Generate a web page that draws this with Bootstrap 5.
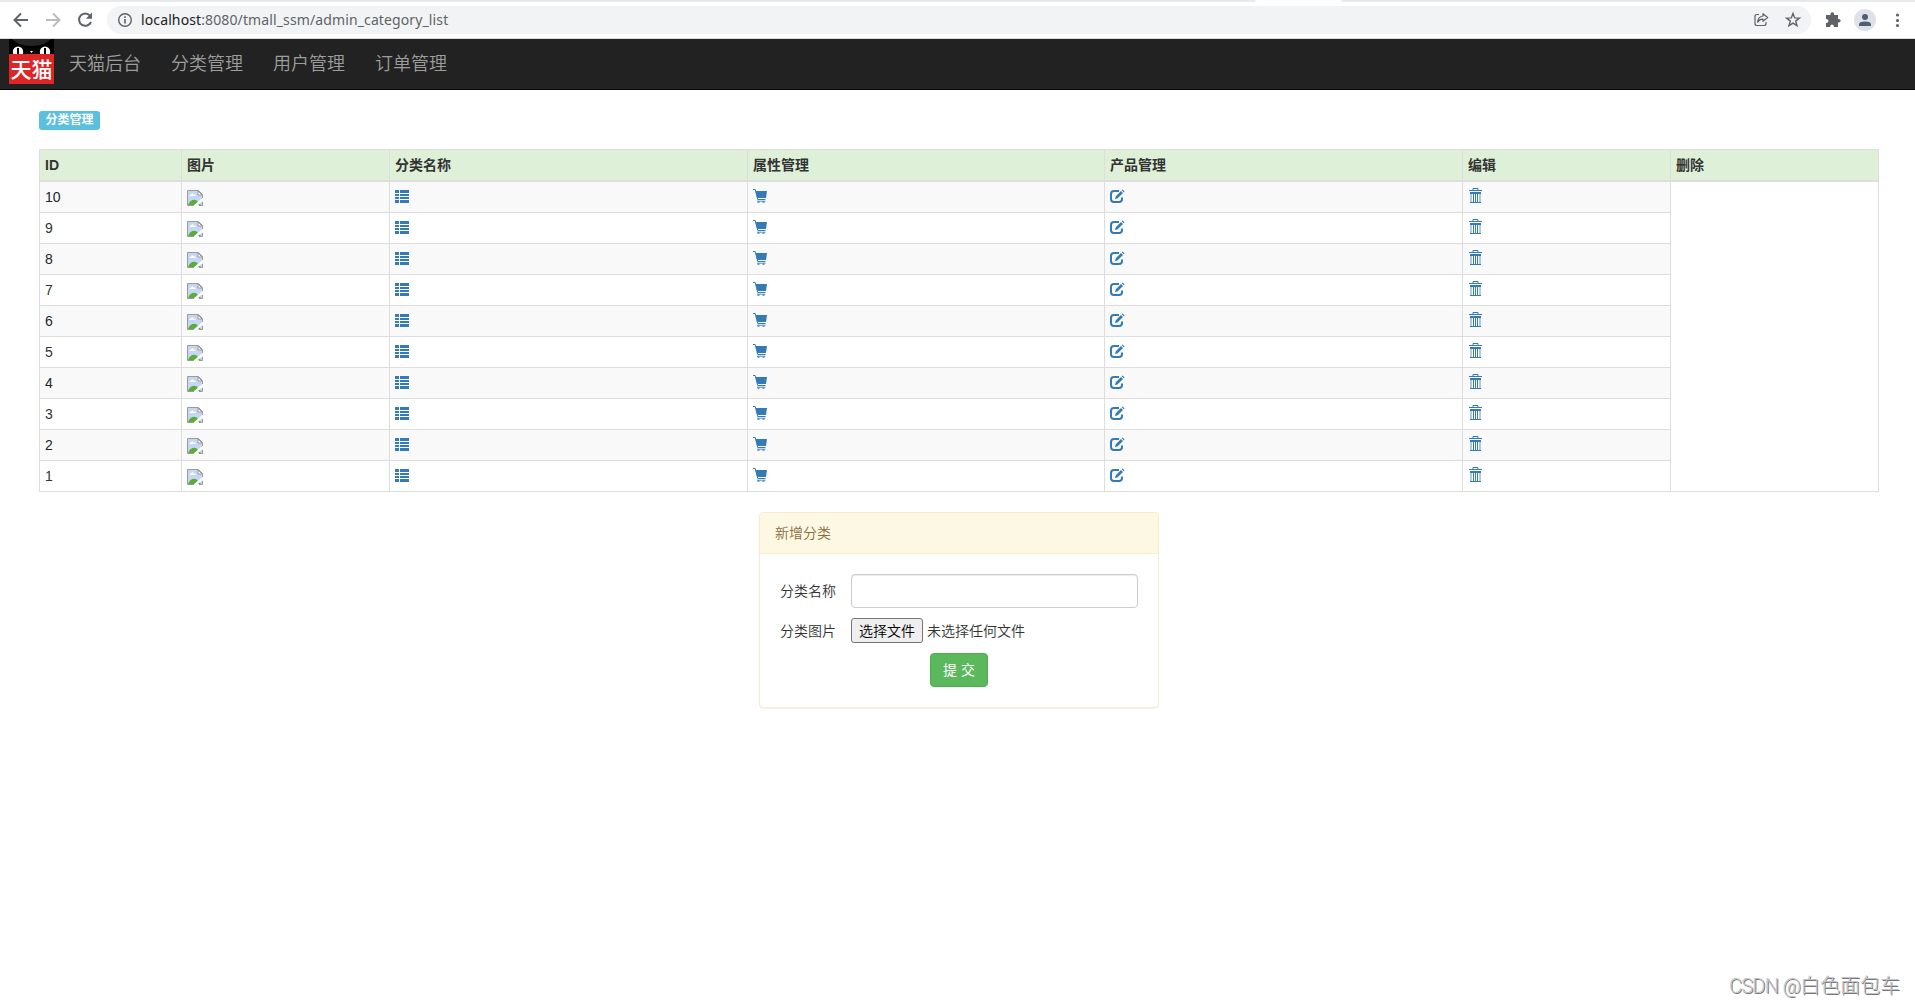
<!DOCTYPE html>
<html lang="zh-CN">
<head>
<meta charset="utf-8">
<title>分类管理</title>
<link href="https://cdn.jsdelivr.net/npm/bootstrap@5.3.0/dist/css/bootstrap.min.css" rel="stylesheet">
<style>
body{font-family:"Liberation Sans","Noto Sans CJK SC",sans-serif;font-size:14px;font-weight:350;line-height:20px;color:#333;background:#fff;height:1005px;overflow:hidden}
svg{display:block;flex:none}
.tabstrip{height:2px;background:#e7eaed}
.tab-active{width:87px;height:2px;margin-left:1255px;background:#fff;border-radius:2px 2px 0 0}
.toolbar{height:37px;border-bottom:1px solid #dadcdf;padding:4px 7px 4px 11px;color:#5f6368}
.toolbar .forward,.toolbar .reload{margin-left:12px}
.address{height:28px;background:#f1f3f4;border-radius:14px;margin-left:12px;margin-right:13px;padding:0 9px 0 10px}
.url{font-family:"Noto Sans","Open Sans",sans-serif;font-size:14px;font-weight:400;margin-left:8px;color:#5f6368;white-space:nowrap;letter-spacing:.12px}
.url b{font-weight:400;color:#202124}
.star{margin-left:15px}
.avatar{margin-left:12px}
.dots{margin-left:12px}
.topnav{height:51px;background:#222;border-bottom:1px solid #080808;padding:0 0 0 9px;align-items:flex-start}
.topnav .nav-link{color:#9d9d9d;font-size:18px;line-height:20px;padding:15px;font-weight:350}
.page{padding:21px 36px 0 39px}
.label-info{display:block;width:61px;height:19px;padding:0;line-height:18px;font-size:12px;font-weight:700;background:#5bc0de;border-radius:3px;margin-bottom:19px}
.cat-table{table-layout:fixed;width:1840px;margin-bottom:20px;border-collapse:separate;border-spacing:0;border:0 solid #ddd;border-width:1px 0 0 1px;color:#333}
.cat-table>:not(caption)>*>*{border:0 solid #ddd;border-width:0 1px 1px 0;padding:5px;height:31px;line-height:20px;vertical-align:top;box-shadow:none;color:#333}
.cat-table>thead>tr>th{background:#dff0d8;border-bottom-width:2px;height:32px}
.cat-table>tbody>tr:nth-child(odd)>td{background:#f9f9f9}
.cat-table>tbody>tr>td.blank{background:#fff}
.cat-table>tbody>tr>td:nth-child(2)>svg{margin-top:3px}
.cat-table a{display:block;width:16px;height:20px;color:#337ab7}
.cat-table a svg{padding-top:2px}
.cat-table a .icon-trash{padding-top:1px}
.panel-add{width:400px;height:196px;margin-left:720px;border:1px solid #faebcc;border-radius:4px;box-shadow:0 1px 1px rgba(0,0,0,.05)}
.panel-add .card-header{background:#fcf8e3;border-color:#faebcc;color:#8a6d3b;padding:10px 15px;height:41px}
.panel-add .card-body{padding:20px}
.field-name{width:71px}
.name-input{width:287px;height:34px;border:1px solid #ccc;border-radius:4px;box-shadow:inset 0 1px 1px rgba(0,0,0,.075);font-size:14px}
.file-row{height:29px}
.file-btn{width:72px;height:25px;padding:0;line-height:22px;border:1px solid #767676;border-radius:3px;background:#efefef;color:#000;font-size:14px;font-weight:350}
.send-row{margin-top:8px}
.send{width:58px;height:34px;padding:0;line-height:20px;font-size:14px;background:#5cb85c;border-color:#4cae4c;border-radius:4px}
.watermark{position:absolute;right:15px;top:971px;font-family:Roboto,"Noto Sans CJK SC",sans-serif;font-size:20px;line-height:30px;color:#c4c4c4;font-weight:300;white-space:nowrap;text-shadow:1px 1px 0 #777}
.watermark span{letter-spacing:-.7px}
</style>
</head>
<body class="position-relative">
<svg width="0" height="0" class="position-absolute" aria-hidden="true">
<symbol id="broken" viewBox="0 0 16 16"><path d="M.5.5h11l4 4v11H.5z" fill="#c5d7f5"/><path d="M2.500 6h6.200C8.700 4.500 7.500 4.200 6.800 4.700 6.400 2.800 4 3.200 4 4.700 3 4.400 2.200 5.200 2.500 6z" fill="#fff"/><path d="M1 15c2-5.500 7.500-7 10-3l3 3z" fill="#5bad36"/><path d="M16 7.500v3L10 16H6z" fill="#fff"/><path d="M.5 15.500V.5h11l4 4V8M.5 15.500H7M12 15.500h3.500V12" fill="none" stroke="#9b9b9b"/><path d="M11 1v4h4z" fill="#fff" stroke="#9b9b9b"/></symbol>
<symbol id="list" viewBox="0 0 14 15"><path d="M0 1h4v3H0zM5 1h9v3H5zM0 5h4v2H0zM5 5h9v2H5zM0 8h4v2H0zM5 8h9v2H5zM0 11h4v3H0zM5 11h9v3H5z" fill="currentColor"/></symbol>
<symbol id="cart" viewBox="0 0 14 15"><path d="M0 .5h2.200L4.700 10.500h7.800" fill="none" stroke="currentColor"/><path d="M2.500 2H14l-1 7H4.300z" fill="currentColor"/><path d="M4.500 12.500h2v1.200h-2zM9.500 12.500h2v1.200h-2z" fill="currentColor"/><path d="M4 12.200h8.500" stroke="currentColor" stroke-width=".8"/></symbol>
<symbol id="edit" viewBox="0 0 15 15"><path d="M9 2H4Q1 2 1 5v5q0 3 3 3h5q3 0 3-3V8.500" fill="none" stroke="currentColor" stroke-width="2"/><path d="M5 10.200l.8-3L11 2l2 2-5.300 5.300zM11.700 1.300l.9-.9 2 2-.9.9z" fill="currentColor"/></symbol>
<symbol id="trash" viewBox="0 0 14 16"><path d="M1 2.500h13M5 2V.5h5V2" fill="none" stroke="currentColor"/><path d="M2 4h11v2H2z" fill="currentColor"/><path d="M3 5v10M12 5v10" stroke="currentColor" stroke-opacity=".75"/><path d="M2 14.500h11M5.500 5v9M7.500 5v9M9.500 5v9" fill="none" stroke="currentColor"/></symbol>
</svg>
<div class="tabstrip"><div class="tab-active"></div></div>
<header class="toolbar d-flex align-items-center">
 <svg width="20" height="20" viewBox="0 0 20 20" fill="none" stroke="#5f6368" stroke-width="2"><path d="M17 10H4M10 3.500L3.500 10l6.500 6.500"/></svg>
 <svg class="forward" width="20" height="20" viewBox="0 0 20 20" fill="none" stroke="#babcbe" stroke-width="2"><path d="M3 10h13M10 3.500l6.500 6.500-6.500 6.500"/></svg>
 <svg class="reload" width="20" height="20" viewBox="0 0 20 20"><path d="M15 5.600A6.200 6.200 0 1 0 16 12" fill="none" stroke="#5f6368" stroke-width="2"/><path d="M17 2.500v6.200h-6.200z" fill="#5f6368"/></svg>
 <div class="address d-flex align-items-center flex-grow-1">
  <svg width="16" height="16" viewBox="0 0 16 16"><circle cx="8" cy="8" r="6.300" fill="none" stroke="#5f6368" stroke-width="1.400"/><path d="M8 7v4.500M8 4.300v1.600" stroke="#5f6368" stroke-width="1.600"/></svg>
  <span class="url"><b>localhost</b>:8080/tmall_ssm/admin_category_list</span>
  <svg class="ms-auto" width="16" height="16" viewBox="0 0 16 16" fill="none" stroke="#5f6368" stroke-width="1.200" stroke-linejoin="round"><path d="M6 2.500H4Q2 2.500 2 4.500v7q0 2 2 2h7q2 0 2-2V10"/><path d="M10 1.700L14.700 5.500 10 9.300V7.200Q6.500 7 4.700 10.200 5 4.500 10 4z"/></svg>
  <svg class="star" width="18" height="18" viewBox="0 0 18 18" fill="none" stroke="#5f6368" stroke-width="1.400"><path d="M9 2.500l1.700 4.400 4.700.2-3.700 3 1.300 4.600L9 12.100l-4 2.600 1.300-4.600-3.700-3 4.700-.2z"/></svg>
 </div>
 <svg width="18" height="18" viewBox="0 0 18 18"><path d="M2 4h4.500q-.3-2.700 1.800-2.700T10.100 4H14v4q2.700-.2 2.700 1.800T14 11.600V16h-4q.1-2.500-2-2.500T6.200 16H2v-4q2.500.1 2.500-2T2 8z" fill="#5f6368"/></svg>
 <svg class="avatar" width="22" height="22" viewBox="0 0 22 22"><circle cx="11" cy="11" r="11" fill="#dee1e6"/><circle cx="11" cy="8" r="3" fill="#4f5d75"/><path d="M5 17v-1.500q0-3 6-3t6 3V17z" fill="#4f5d75"/></svg>
 <svg class="dots" width="20" height="20" viewBox="0 0 20 20" fill="#5f6368"><circle cx="9.500" cy="5" r="1.600"/><circle cx="9.500" cy="10.500" r="1.600"/><circle cx="9.500" cy="15.500" r="1.600"/></svg>
</header>
<nav class="topnav d-flex">
 <svg width="45" height="45" viewBox="0 0 45 45"><path d="M0 0h3l6 4q13 4 27 0l6-4h3v16H0z" fill="#000"/><path d="M3 0l7 5q13 4 25 0l7-5z" fill="#252525"/><g fill="#fff"><ellipse cx="9" cy="13" rx="5.200" ry="5.500"/><ellipse cx="36" cy="13" rx="5.200" ry="5.500"/><path d="M21 12h3l-1.500 2z"/></g><path d="M8 9h2v7H8zM35 9h2v7h-2z" fill="#000"/><path d="M0 15h45v30H0z" fill="#dd2727"/><text x="1.500" y="37.500" font-family="Noto Sans CJK SC" font-size="21" font-weight="500" fill="#fff">天猫</text></svg>
 <a class="nav-link">天猫后台</a><a class="nav-link">分类管理</a><a class="nav-link">用户管理</a><a class="nav-link">订单管理</a>
</nav>
<main class="page">
 <span class="badge label-info">分类管理</span>
 <table class="table table-striped table-bordered cat-table">
  <colgroup><col style="width:142px"><col style="width:208px"><col style="width:358px"><col style="width:357px"><col style="width:358px"><col style="width:208px"><col style="width:208px"></colgroup>
  <thead><tr><th>ID</th><th>图片</th><th>分类名称</th><th>属性管理</th><th>产品管理</th><th>编辑</th><th>删除</th></tr></thead>
  <tbody id="rows"></tbody>
 </table>
 <section class="card panel-add">
  <div class="card-header">新增分类</div>
  <div class="card-body">
   <div class="d-flex align-items-center"><label class="field-name">分类名称</label><input class="form-control name-input" type="text"></div>
   <div class="file-row d-flex align-items-center mt-2"><label class="field-name">分类图片</label><button class="file-btn" type="button">选择文件</button><span class="ms-1">未选择任何文件</span></div>
   <div class="send-row d-flex justify-content-center"><button class="btn btn-success send" type="button">提 交</button></div>
  </div>
 </section>
</main>
<div class="watermark"><span>CSDN @</span>白色面包车</div>
<script>
const icon=(id,w,h)=>`<svg class="icon-${id}" width="${w}" height="${h}"><use href="#${id}"/></svg>`;
const link=(id,w,h)=>`<td><a href="#">${icon(id,w,h)}</a></td>`;
let html='';
for(let n=10;n>0;n--){
 html+=`<tr><td>${n}</td><td>${icon('broken',16,16)}</td>${link('list',14,17)}${link('cart',14,17)}${link('edit',15,17)}${link('trash',14,17)}${n===10?'<td class="blank" rowspan="10"></td>':''}</tr>`;
}
document.getElementById('rows').innerHTML=html;
</script>
<script src="https://cdn.jsdelivr.net/npm/bootstrap@5.3.0/dist/js/bootstrap.bundle.min.js"></script>
</body>
</html>
